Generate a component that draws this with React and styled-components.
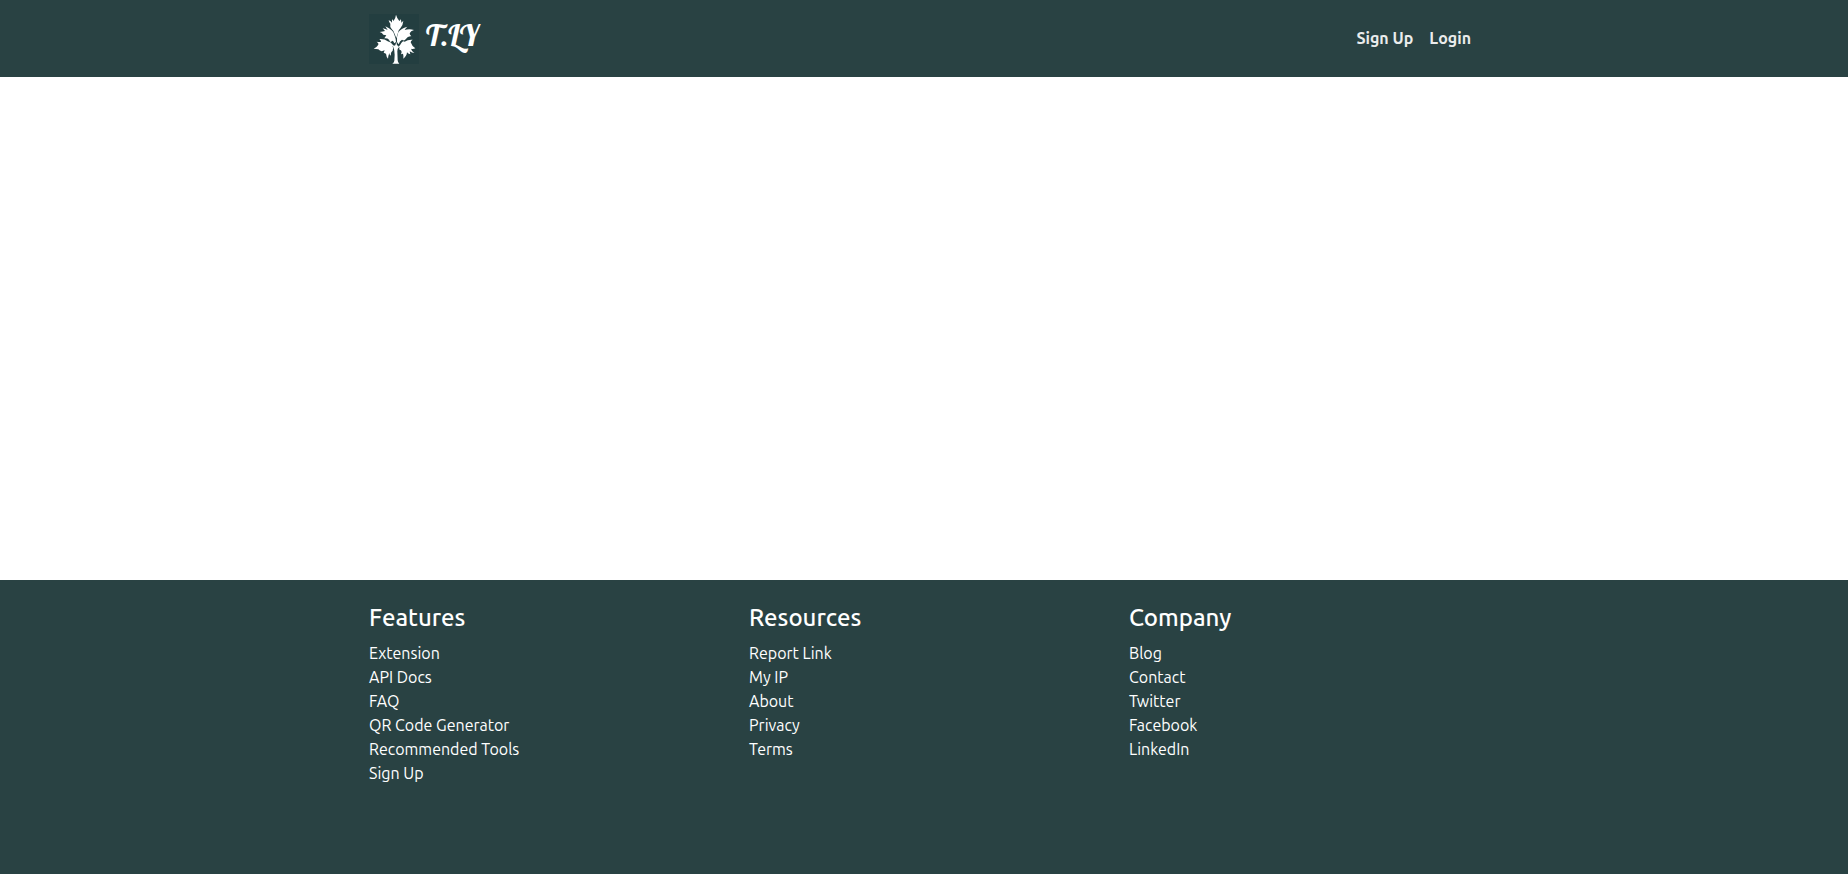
import React from "react";
import styled, { createGlobalStyle } from "styled-components";

const GlobalStyle = createGlobalStyle`
  *, *::before, *::after { box-sizing: border-box; }
  body {
    margin: 0;
    background: #fff;
    color: #fff;
    font-family: Ubuntu, "Noto Sans", "Open Sans", sans-serif;
    font-size: 16px;
    line-height: 24px;
  }
`;

const Page = styled.div`
  min-height: 100vh;
  display: flex;
  flex-direction: column;
`;

const Container = styled.div`
  width: 100%;
  max-width: 1140px;
  margin: 0 auto;
  padding: 0 15px;
`;

const Header = styled.header`
  background: #294243;
  padding: 14px 0 13px;
`;

const Bar = styled(Container)`
  display: flex;
  align-items: center;
  justify-content: space-between;
`;

const Brand = styled.a`
  display: flex;
  align-items: center;
  gap: 7px;
  color: #fff;
  text-decoration: none;
`;

const Logo = styled.svg`
  display: block;
  width: 50px;
  height: 50px;
`;

const BrandName = styled.span`
  padding-bottom: 8px;
  font: 400 30px/36px Lobster, "Liberation Serif", serif;
`;

const Nav = styled.nav`
  display: flex;
  gap: 16px;
  padding: 0 8px 2px 0;
`;

const NavLink = styled.a`
  color: #eaecec;
  font-weight: 700;
  text-decoration: none;
`;

const Main = styled.main`
  flex: 1;
`;

const Footer = styled.footer`
  background: #294243;
  padding: 24px 0 89px;
`;

const Columns = styled(Container)`
  display: grid;
  grid-template-columns: repeat(3, 1fr);
  column-gap: 30px;
`;

const Heading = styled.h4`
  margin: 0 0 9px;
  font-size: 24px;
  font-weight: 500;
  line-height: 28px;
`;

const LinkList = styled.ul`
  margin: 0;
  padding: 0;
  list-style: none;
`;

const FooterLink = styled.a`
  color: #fff;
  text-decoration: none;
`;

const sections = [
  {
    title: "Features",
    links: ["Extension", "API Docs", "FAQ", "QR Code Generator", "Recommended Tools", "Sign Up"],
  },
  { title: "Resources", links: ["Report Link", "My IP", "About", "Privacy", "Terms"] },
  { title: "Company", links: ["Blog", "Contact", "Twitter", "Facebook", "LinkedIn"] },
];

function TreeLogo() {
  return (
    <Logo viewBox="0 0 150 150" aria-hidden="true">
      <rect width="150" height="150" fill="#233e40" />
      <g fill="#fff">
        <path d="M81 2 Q84 13 91 21 Q94 19 95 15 Q97 20 97 26 L103 20 Q102 34 94 43 Q88 48 87 56 L82 72 L77 60 Q76 52 68 45 Q62 40 64 29 Q60 24 59 19 Q65 20 69 26 Q68 20 70 16 Q73 18 73 22 Q80 13 81 2Z" />
        <path d="M81 84 L76 88 Q72 77 68 82 Q64 88 60 77 Q55 72 46 73 Q50 67 52 64 L43 62 Q40 56 32 54 Q43 52 48 51 L41 43 Q50 45 56 48 Q52 42 49 37 Q62 43 67 48 Q75 53 77 65 L80 75Z" />
        <path d="M84 84 Q83 66 88 55 Q96 43 115 38 Q109 43 107 48 Q121 44 135 48 Q125 51 122 58 Q122 63 127 67 Q117 65 110 76 Q106 82 99 77 Q92 80 89 91Z" />
        <path d="M77 103 L70 95 Q75 103 71 110 Q64 115 66 125 Q60 122 61 117 Q58 124 57 134 Q52 128 51 119 L44 116 L47 109 Q35 115 28 106 L14 104 Q24 99 28 92 Q30 88 23 83 Q29 85 36 84 Q36 78 31 75 Q47 74 56 82 Q66 84 72 93 L77 97Z" />
        <path d="M88 99 Q94 93 97 87 Q101 80 107 83 Q116 76 131 77 Q125 80 125 85 Q129 97 139 103 Q132 106 126 104 Q128 112 136 117 Q129 117 122 112 L124 121 Q117 120 114 115 Q113 127 103 134 Q104 125 102 119 L96 121 Q100 114 96 109 Q88 108 92 98 L88 103Z" />
        <path d="M76 140 L77 122 Q77 108 73 99 Q76 93 79 94 L82 83 L84 94 Q88 94 89 99 Q85 104 85 112 L86 139 Q86 145 91 149 L70 149 Q76 145 76 140Z" />
      </g>
    </Logo>
  );
}

export default function App() {
  return (
    <Page>
      <GlobalStyle />
      <Header>
        <Bar>
          <Brand href="#">
            <TreeLogo />
            <BrandName>T.LY</BrandName>
          </Brand>
          <Nav aria-label="Account">
            <NavLink href="#signup">Sign Up</NavLink>
            <NavLink href="#login">Login</NavLink>
          </Nav>
        </Bar>
      </Header>
      <Main />
      <Footer>
        <Columns>
          {sections.map(({ title, links }) => (
            <section key={title}>
              <Heading>{title}</Heading>
              <LinkList>
                {links.map((label) => (
                  <li key={label}>
                    <FooterLink href="#">{label}</FooterLink>
                  </li>
                ))}
              </LinkList>
            </section>
          ))}
        </Columns>
      </Footer>
    </Page>
  );
}
